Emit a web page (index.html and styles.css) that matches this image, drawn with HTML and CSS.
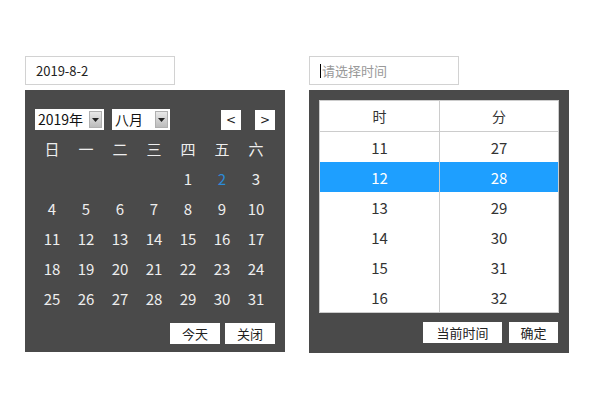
FILE: index.html
```html
<!DOCTYPE html>
<html lang="zh">
<head>
<meta charset="utf-8">
<link rel="stylesheet" href="styles.css">
</head>
<body>
<div class="page">
  <div class="picker">
    <div class="field"><span class="value">2019-8-2</span></div>
    <div class="panel cal">
      <div class="cal-head">
        <div class="sel year"><span class="sel-text">2019年</span><span class="sel-arrow"><svg width="7" height="4" viewBox="0 0 7 4"><path d="M0 0h7L3.5 4z" fill="#222"/></svg></span></div>
        <div class="sel month"><span class="sel-text">八月</span><span class="sel-arrow"><svg width="7" height="4" viewBox="0 0 7 4"><path d="M0 0h7L3.5 4z" fill="#222"/></svg></span></div>
        <div class="nav">
          <span class="navbtn">&lt;</span>
          <span class="navbtn">&gt;</span>
        </div>
      </div>
      <div class="grid">
        <span class="wd">日</span><span class="wd">一</span><span class="wd">二</span><span class="wd">三</span><span class="wd">四</span><span class="wd">五</span><span class="wd">六</span>
        <span></span><span></span><span></span><span></span><span>1</span><span class="cur">2</span><span>3</span>
        <span>4</span><span>5</span><span>6</span><span>7</span><span>8</span><span>9</span><span>10</span>
        <span>11</span><span>12</span><span>13</span><span>14</span><span>15</span><span>16</span><span>17</span>
        <span>18</span><span>19</span><span>20</span><span>21</span><span>22</span><span>23</span><span>24</span>
        <span>25</span><span>26</span><span>27</span><span>28</span><span>29</span><span>30</span><span>31</span>
      </div>
      <div class="actions cal-actions">
        <span class="btn w50">今天</span>
        <span class="btn w50">关闭</span>
      </div>
    </div>
  </div>
  <div class="picker">
    <div class="field"><span class="caret"></span><span class="placeholder">请选择时间</span></div>
    <div class="panel time">
      <div class="ttable">
        <div class="trow thead"><span>时</span><span>分</span></div>
        <div class="trow"><span>11</span><span>27</span></div>
        <div class="trow active"><span>12</span><span>28</span></div>
        <div class="trow"><span>13</span><span>29</span></div>
        <div class="trow"><span>14</span><span>30</span></div>
        <div class="trow"><span>15</span><span>31</span></div>
        <div class="trow last"><span>16</span><span>32</span></div>
      </div>
      <div class="actions time-actions">
        <span class="btn w79">当前时间</span>
        <span class="btn w49">确定</span>
      </div>
    </div>
  </div>
</div>
</body>
</html>
```

FILE: styles.css
```css
* { box-sizing: border-box; }
html, body { margin: 0; padding: 0; background: #fff; }
body {
  font-family: "Noto Sans CJK SC", "Open Sans", "DejaVu Sans", sans-serif;
  color: #333;
}
.page {
  display: flex;
  gap: 24px;
  padding: 56px 0 0 25px;
}
.picker { width: 260px; }
.field {
  width: 150px;
  height: 29px;
  border: 1px solid #d2d2d2;
  display: flex;
  align-items: center;
  padding-left: 10px;
  font-size: 13px;
  margin-bottom: 5px;
}
.value { color: #222; }
.caret {
  width: 1px;
  height: 14px;
  background: #000;
  margin-right: 1px;
}
.placeholder { color: #999; }
.panel {
  background: #4a4a4a;
  width: 260px;
}
.cal { padding: 19px 10px 8px 10px; height: 262px; }
.cal-head {
  display: flex;
  align-items: center;
  height: 21px;
}
.sel {
  display: flex;
  align-items: center;
  background: #fff;
  height: 21px;
  padding: 2px;
  color: #111;
  font-size: 14px;
}
.year { width: 69px; }
.month { width: 58px; margin-left: 8px; }
.sel-text { flex: 1; padding-left: 1px; line-height: 17px; }
.sel-arrow {
  width: 13px;
  height: 17px;
  background: linear-gradient(#e8e8e8, #bcbcbc);
  border: 1px solid #b0b0b0;
  display: flex;
  align-items: center;
  justify-content: center;
}
.nav { margin-left: auto; display: flex; gap: 14px; }
.navbtn {
  width: 20px;
  height: 20px;
  background: #fff;
  color: #222;
  font-size: 12px;
  display: flex;
  align-items: center;
  justify-content: center;
  font-family: "DejaVu Sans", sans-serif;
}
.grid {
  display: grid;
  grid-template-columns: repeat(7, 34px);
  grid-auto-rows: 30px;
  margin-top: 3px;
  color: #eee;
  font-size: 15px;
}
.grid span {
  display: flex;
  align-items: center;
  justify-content: center;
}
.grid .cur { color: #2d8bd8; }
.actions {
  display: flex;
  justify-content: flex-end;
}
.cal-actions { margin-top: 10px; gap: 5px; }
.btn {
  background: #fff;
  color: #222;
  height: 21px;
  font-size: 13px;
  display: flex;
  align-items: center;
  justify-content: center;
}
.w50 { width: 50px; }
.w79 { width: 79px; }
.w49 { width: 49px; }
.time { padding: 10px; height: 263px; }
.ttable {
  background: #fff;
  border: 1px solid #ccc;
}
.trow {
  display: grid;
  grid-template-columns: 120px 1fr;
  height: 30px;
  font-size: 15px;
  color: #333;
}
.trow span {
  display: flex;
  align-items: center;
  justify-content: center;
}
.trow span:first-child { border-right: 1px solid #ccc; }
.thead { height: 31px; border-bottom: 1px solid #ccc; font-size: 14px; }
.trow.active { background: #1e9fff; color: #fff; }
.trow.active span:first-child { border-right-color: #ccc; }
.time-actions { margin-top: 9px; gap: 7px; padding-right: 1px; }
```
